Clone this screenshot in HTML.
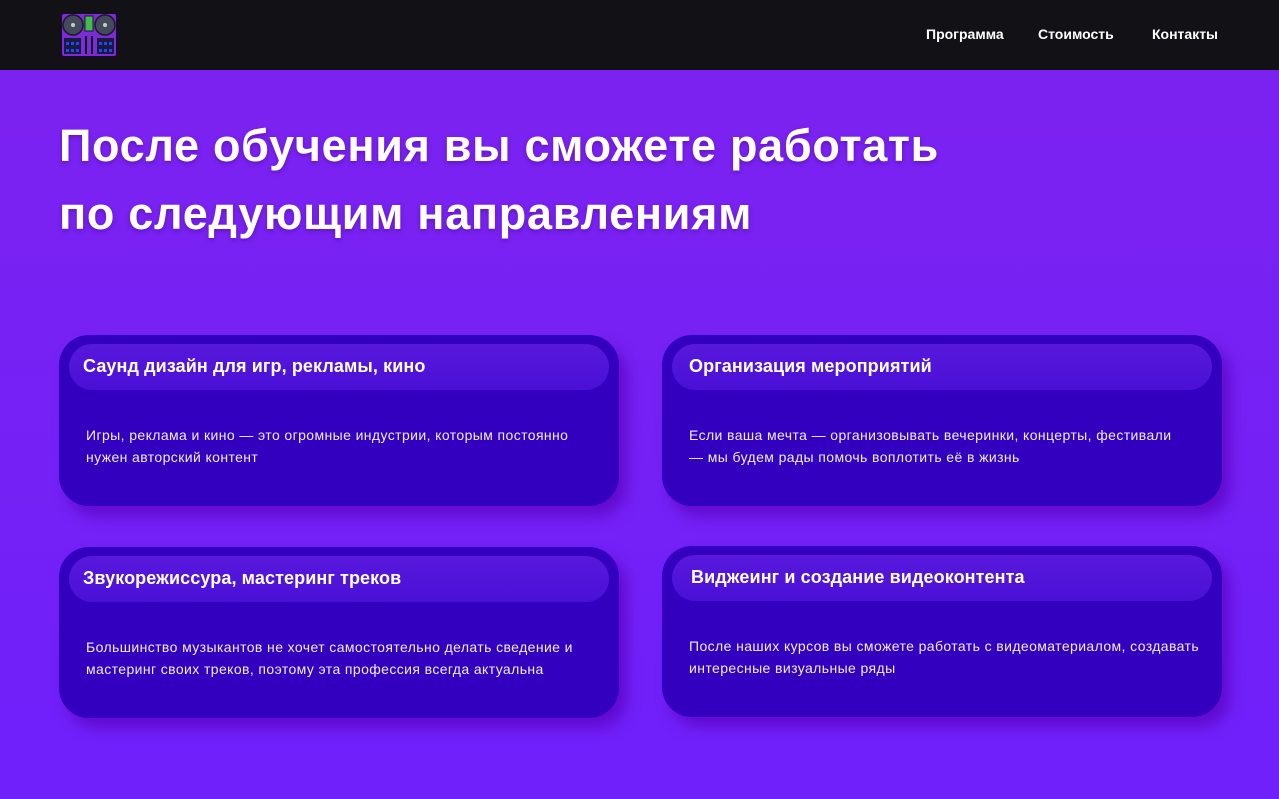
<!DOCTYPE html>
<html><head><meta charset="utf-8"><style>
*{margin:0;padding:0;box-sizing:border-box}
body{width:1279px;height:799px;overflow:hidden;font-family:"Liberation Sans","DejaVu Sans",sans-serif;background:linear-gradient(180deg,#7d22ef 0%,#6f20fb 100%);position:relative;color:#fff}
.hdr{position:absolute;left:0;top:0;width:1279px;height:70px;background:#121216}
.nav{position:absolute;top:26px;font-size:14px;font-weight:bold;color:#fff}
h1{position:absolute;left:59px;top:112px;font-size:45px;line-height:68px;font-weight:bold;letter-spacing:0.7px;text-shadow:0 2px 4px rgba(60,0,120,.4)}
.card{position:absolute;width:560px;height:171px;background:#3300bf;border-radius:30px;box-shadow:8px 10px 14px rgba(90,0,190,.7)}
.pill{position:absolute;left:10px;top:9px;width:540px;height:46px;border-radius:23px;background:linear-gradient(180deg,#5818dc,#4a10d6);font-size:18px;font-weight:bold;padding:12px 0 0 14px;letter-spacing:0.1px}
.txt{position:absolute;left:27px;top:89px;width:512px;font-size:14px;line-height:22px;color:#eee;letter-spacing:0.4px}
</style></head><body>
<div class="hdr">
<svg style="position:absolute;left:60px;top:12px" width="58" height="46" viewBox="0 0 58 46">
<rect x="1" y="1" width="56" height="44" rx="3" fill="#7b2bd8" stroke="#1a0a2a" stroke-width="2"/>
<circle cx="13" cy="13" r="10" fill="#444a5a" stroke="#1a1a22" stroke-width="1.5"/><circle cx="13" cy="13" r="2" fill="#ccc"/>
<circle cx="45" cy="13" r="10" fill="#444a5a" stroke="#1a1a22" stroke-width="1.5"/><circle cx="45" cy="13" r="2" fill="#ccc"/>
<rect x="25" y="4" width="8" height="15" fill="#3fbf4a" stroke="#1a1a22"/>
<g fill="#1a1a3a"><rect x="4" y="26" width="17" height="16"/><rect x="37" y="26" width="17" height="16"/></g>
<g fill="#2244ff"><rect x="6" y="30" width="3" height="3"/><rect x="11" y="30" width="3" height="3"/><rect x="16" y="30" width="3" height="3"/><rect x="6" y="37" width="3" height="3"/><rect x="11" y="37" width="3" height="3"/><rect x="16" y="37" width="3" height="3"/><rect x="39" y="30" width="3" height="3"/><rect x="44" y="30" width="3" height="3"/><rect x="49" y="30" width="3" height="3"/><rect x="39" y="37" width="3" height="3"/><rect x="44" y="37" width="3" height="3"/><rect x="49" y="37" width="3" height="3"/></g>
<rect x="25" y="24" width="2" height="18" fill="#111"/><rect x="31" y="24" width="2" height="18" fill="#111"/>
</svg>
<div class="nav" style="left:926px">Программа</div>
<div class="nav" style="left:1038px">Стоимость</div>
<div class="nav" style="left:1152px">Контакты</div>
</div>
<h1>После обучения вы сможете работать<br>по следующим направлениям</h1>
<div class="card" style="left:59px;top:335px"><div class="pill">Саунд дизайн для игр, рекламы, кино</div><div class="txt">Игры, реклама и кино — это огромные индустрии, которым постоянно нужен авторский контент</div></div>
<div class="card" style="left:662px;top:335px"><div class="pill" style="padding-left:17px">Организация мероприятий</div><div class="txt">Если ваша мечта — организовывать вечеринки, концерты, фестивали<br>— мы будем рады помочь воплотить её в жизнь</div></div>
<div class="card" style="left:59px;top:547px"><div class="pill">Звукорежиссура, мастеринг треков</div><div class="txt">Большинство музыкантов не хочет самостоятельно делать сведение и мастеринг своих треков, поэтому эта профессия всегда актуальна</div></div>
<div class="card" style="left:662px;top:546px"><div class="pill" style="padding-left:19px">Виджеинг и создание видеоконтента</div><div class="txt">После наших курсов вы сможете работать с видеоматериалом, создавать интересные визуальные ряды</div></div>
</body></html>
